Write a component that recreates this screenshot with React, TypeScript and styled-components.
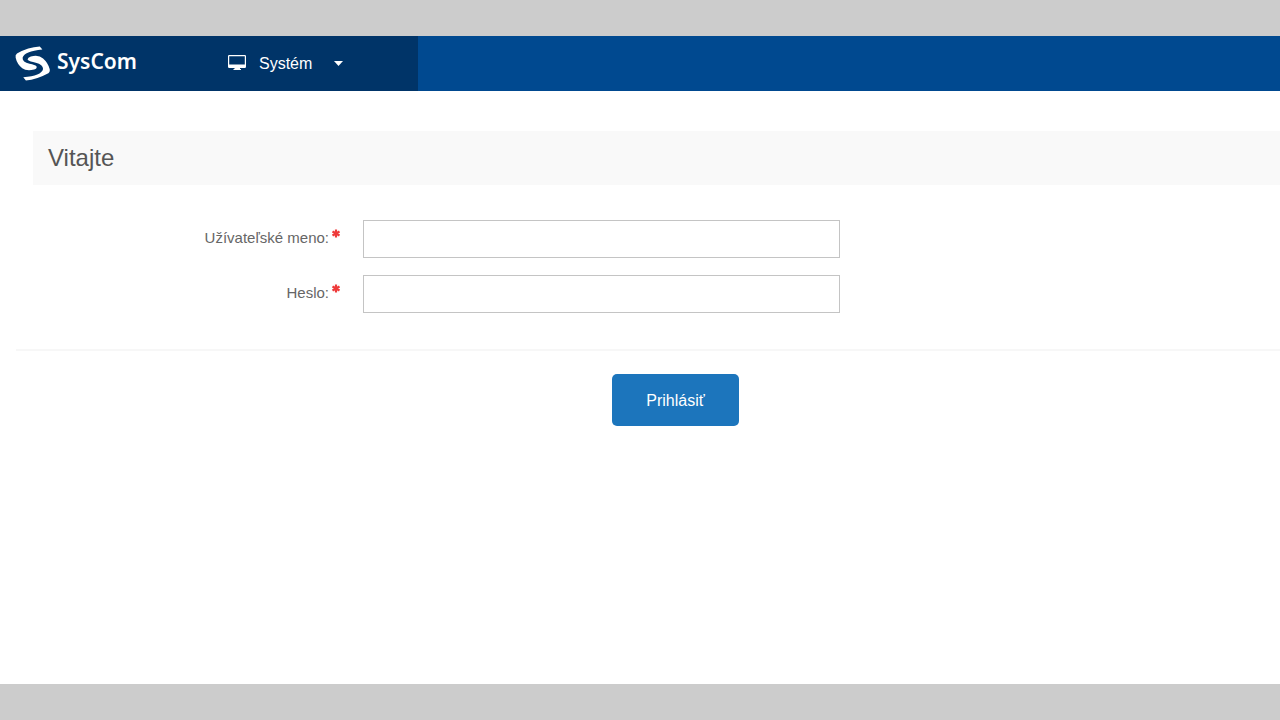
import React from "react";
import styled, { createGlobalStyle } from "styled-components";

const GlobalStyle = createGlobalStyle`
  *, *::before, *::after { box-sizing: border-box; }
  body {
    margin: 0;
    background: #cccccc;
    font-family: "Liberation Sans", Arial, sans-serif;
    color: #555555;
  }
`;

const Frame = styled.div`
  display: flex;
  flex-direction: column;
  min-height: 100vh;
  padding: 36px 0;
`;

const Header = styled.header`
  display: flex;
  height: 55px;
  background: #004990;
`;

const Brand = styled.div`
  display: flex;
  align-items: center;
  gap: 32px;
  width: 418px;
  padding-left: 15px;
  background: #003468;
`;

const HomeLink = styled.a`
  display: flex;
  align-items: center;
  gap: 7px;
  width: 181px;
  height: 55px;
  color: #ffffff;
  font: 600 21px/32px "Noto Sans", sans-serif;
  text-decoration: none;

  svg { display: block; }
  span { padding-bottom: 6px; }
`;

const MenuButton = styled.button`
  display: flex;
  align-items: center;
  height: 55px;
  padding: 0;
  border: 0;
  background: none;
  color: #ffffff;
  font: 16px/20px "Liberation Sans", Arial, sans-serif;
  cursor: pointer;
`;

const MenuText = styled.span`
  margin: 0 22px 0 13px;
`;

const Page = styled.main`
  flex: 1;
  padding: 40px 0 0 16px;
  background: #ffffff;
`;

const Title = styled.h1`
  margin: 0 0 35px 17px;
  padding: 0 15px;
  background: #f9f9f9;
  font-size: 24px;
  font-weight: 400;
  line-height: 54px;
`;

const Fields = styled.div`
  display: flex;
  flex-direction: column;
  gap: 17px;
  padding-bottom: 36px;
  border-bottom: 2px solid #f7f7f7;
`;

const Row = styled.div`
  display: grid;
  grid-template-columns: 324fr 477fr 417fr;
  column-gap: 23px;
`;

const Label = styled.label`
  display: flex;
  justify-content: flex-end;
  gap: 3px;
  color: #666666;
  font-size: 15px;
  line-height: 36px;
  white-space: nowrap;
`;

const Required = styled.svg`
  display: block;
  margin-top: 9px;
`;

const Input = styled.input`
  width: 100%;
  height: 38px;
  padding: 0 12px;
  border: 1px solid #c4c4c4;
  border-radius: 0;
  background: #ffffff;
  color: #555555;
  font: 15px/20px "Liberation Sans", Arial, sans-serif;
`;

const Actions = styled.div`
  display: flex;
  justify-content: center;
  padding: 23px 0 22px 55px;
`;

const Submit = styled.button`
  height: 52px;
  padding: 2px 34px 0;
  border: 0;
  border-radius: 5px;
  background: #1c75bc;
  color: #ffffff;
  font: 16px/20px "Liberation Sans", Arial, sans-serif;
  cursor: pointer;
`;

const Logo = () => (
  <svg width="35" height="35" viewBox="46 47 106 105" fill="#fff" aria-hidden="true">
    <path d="M129 57 L121 48 Q86 50 52 69 Q46 73 48 82 Q52 101 68 114 Q80 123 104 118 Q114 115 111 108 Q107 103 90 100 Q68 95 69 82 Q74 62 129 57Z" />
    <path d="M71 141 L79 151 Q112 148 147 129 Q153 125 151 116 Q146 97 131 84 Q118 72 94 78 Q82 82 85 89 Q91 94 109 97 Q131 102 131 116 Q126 137 71 141Z" />
  </svg>
);

const Monitor = () => (
  <svg width="18" height="18" viewBox="0 0 18 18" aria-hidden="true">
    <path
      fill="#fff"
      fillRule="evenodd"
      d="M1.2 0H16.8Q18 0 18 1.2V11.8Q18 13 16.8 13H12V14H13V15H5.5V14H6.5V13H1.2Q0 13 0 11.8V1.2Q0 0 1.2 0ZM1.2 1.2V9.5H16.8V1.2Z"
    />
  </svg>
);

const Caret = () => (
  <svg width="9" height="5" viewBox="0 0 9 5" aria-hidden="true">
    <path d="M0 0H9L4.5 5Z" fill="#fff" />
  </svg>
);

const Asterisk = () => (
  <Required width="8" height="9" viewBox="0 0 8 9" aria-hidden="true">
    <path d="M4 0.4V8.6M0.5 2.4L7.5 6.6M7.5 2.4L0.5 6.6" stroke="#ee3a3a" strokeWidth="2.2" />
  </Required>
);

type FieldProps = { id: string; label: string; type: string };

const Field = ({ id, label, type }: FieldProps) => (
  <Row>
    <Label htmlFor={id}>
      {label}
      <Asterisk />
    </Label>
    <Input id={id} name={id} type={type} required />
  </Row>
);

export default function App() {
  return (
    <Frame>
      <GlobalStyle />
      <Header>
        <Brand>
          <HomeLink href="#">
            <Logo />
            <span>SysCom</span>
          </HomeLink>
          <MenuButton type="button" aria-haspopup="menu">
            <Monitor />
            <MenuText>Systém</MenuText>
            <Caret />
          </MenuButton>
        </Brand>
      </Header>
      <Page>
        <Title>Vitajte</Title>
        <form onSubmit={(event) => event.preventDefault()}>
          <Fields>
            <Field id="username" label="Užívateľské meno:" type="text" />
            <Field id="password" label="Heslo:" type="password" />
          </Fields>
          <Actions>
            <Submit type="submit">Prihlásiť</Submit>
          </Actions>
        </form>
      </Page>
    </Frame>
  );
}
